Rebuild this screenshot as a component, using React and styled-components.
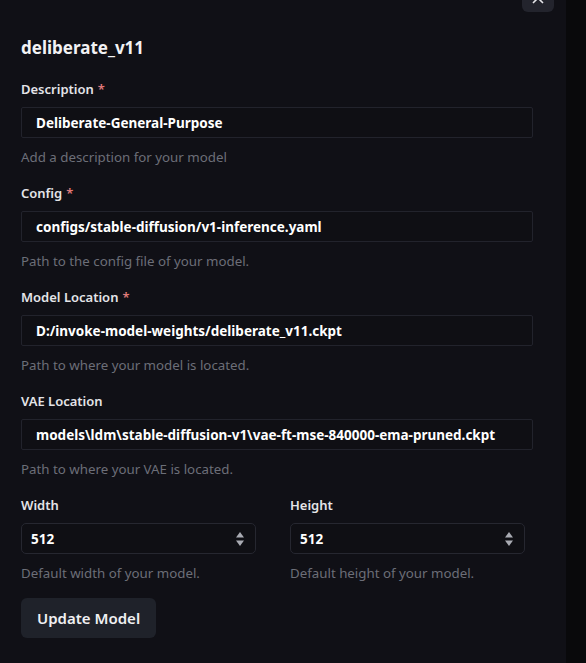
import React from 'react';
import styled, { createGlobalStyle } from 'styled-components';

const GlobalStyle = createGlobalStyle`
  html, body {
    margin: 0;
    padding: 0;
    background: #09090b;
  }
  body {
    font-family: "Noto Sans", "Open Sans", sans-serif;
  }
`;

const Page = styled.div`
  display: flex;
  width: 586px;
  height: 663px;
  overflow: hidden;
`;

const Panel = styled.div`
  position: relative;
  width: 566px;
  background: #101016;
  padding: 36px 33px 0 21px;
  box-sizing: border-box;
`;

const CloseButton = styled.button`
  position: absolute;
  top: -20px;
  left: 522px;
  width: 32px;
  height: 32px;
  border: none;
  border-radius: 6px;
  background: #23242d;
  color: #e6e6ea;
  display: flex;
  align-items: flex-end;
  justify-content: center;
  padding: 0 0 8px;
`;

const Title = styled.h2`
  margin: 0 0 19px;
  font-size: 17px;
  line-height: 24px;
  font-weight: 700;
  color: #f2f2f4;
`;

const Field = styled.div`
  display: flex;
  flex-direction: column;
  width: ${p => p.width || '100%'};
  margin-bottom: 17px;
`;

const Label = styled.label`
  font-size: 13px;
  line-height: 20px;
  font-weight: 600;
  color: #e4e4e8;
  margin-bottom: 8px;
`;

const Required = styled.span`
  color: #e07a7a;
  margin-left: 4px;
`;

const TextInput = styled.div`
  height: 31px;
  box-sizing: border-box;
  border: 1.5px solid #22232c;
  border-radius: 2px;
  background: #0f0f14;
  padding: 0 14px;
  display: flex;
  align-items: center;
  font-size: 13.5px;
  font-weight: 700;
  color: #ffffff;
  white-space: nowrap;
  overflow: hidden;
`;

const NumberInput = styled(TextInput)`
  border-radius: 5px;
  border-color: #262730;
  padding: 0 10px 0 9px;
  justify-content: space-between;
`;

const Helper = styled.div`
  margin-top: 10px;
  font-size: 13.3px;
  line-height: 18px;
  color: #6c6e78;
`;

const Row = styled.div`
  display: flex;
  gap: 34px;
`;

const Stepper = styled.svg`
  width: 10px;
  height: 18px;
`;

const UpdateButton = styled.button`
  margin-top: -1px;
  height: 40px;
  padding: 0 16px;
  border: none;
  border-radius: 6px;
  background: #1f222a;
  color: #f0f0f2;
  font-family: inherit;
  font-size: 15px;
  font-weight: 600;
`;

const Strip = styled.div`
  flex: 1;
  background: #09090b;
`;

const fields = [
  { label: 'Description', value: 'Deliberate-General-Purpose', help: 'Add a description for your model', required: true },
  { label: 'Config', value: 'configs/stable-diffusion/v1-inference.yaml', help: 'Path to the config file of your model.', required: true },
  { label: 'Model Location', value: 'D:/invoke-model-weights/deliberate_v11.ckpt', help: 'Path to where your model is located.', required: true },
  { label: 'VAE Location', value: 'models\\ldm\\stable-diffusion-v1\\vae-ft-mse-840000-ema-pruned.ckpt', help: 'Path to where your VAE is located.' },
];

const StepIcon = () => (
  <Stepper viewBox="0 0 10 18">
    <path d="M5 2 L9 7.5 H1 Z" fill="#a9abb3" />
    <path d="M5 16 L9 10.5 H1 Z" fill="#a9abb3" />
  </Stepper>
);

const App = () => (
  <Page>
    <GlobalStyle />
    <Panel>
      <CloseButton aria-label="Close">
        <svg width="12" height="12" viewBox="0 0 12 12">
          <path d="M1 1 L11 11 M11 1 L1 11" stroke="#e6e6ea" strokeWidth="1.6" />
        </svg>
      </CloseButton>
      <Title>deliberate_v11</Title>
      {fields.map(f => (
        <Field key={f.label}>
          <Label>
            {f.label}
            {f.required && <Required>*</Required>}
          </Label>
          <TextInput>{f.value}</TextInput>
          <Helper>{f.help}</Helper>
        </Field>
      ))}
      <Row>
        <Field width="235px">
          <Label>Width</Label>
          <NumberInput>
            512
            <StepIcon />
          </NumberInput>
          <Helper>Default width of your model.</Helper>
        </Field>
        <Field width="235px">
          <Label>Height</Label>
          <NumberInput>
            512
            <StepIcon />
          </NumberInput>
          <Helper>Default height of your model.</Helper>
        </Field>
      </Row>
      <UpdateButton>Update Model</UpdateButton>
    </Panel>
    <Strip />
  </Page>
);

export default App;
